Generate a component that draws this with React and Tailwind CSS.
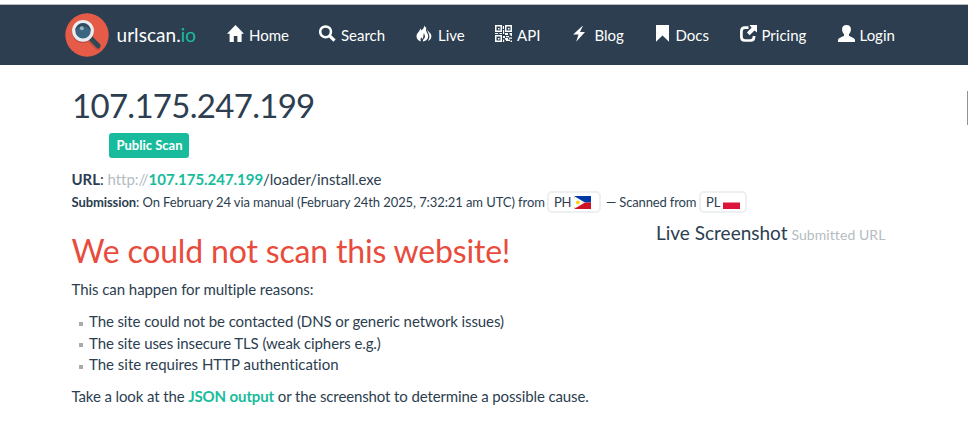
const glyphs = {
  home: <path fill="#fff" d="M8.5 0 17 8.8H14.6V17H10.4V11H6.8V17H2.6V8.8H0Z" />,
  search: (
    <g fill="none" stroke="#fff">
      <circle cx="6.6" cy="6.8" r="5.4" strokeWidth="2.5" />
      <path d="M10.700 10.900 15.500 15.700" strokeWidth="3.2" />
    </g>
  ),
  live: (
    <path
      fill="#fff"
      d="M8.200 0C8.500 2.800 7 4 5.400 5.400 5.200 4.800 4.800 4 4.200 3.500 4 6.500 .5 8 .5 11.300c0 2.600 1.700 4.400 4.400 5.200C4.300 14.800 4.400 13.700 5.300 12.300c.2 1 .6 1.300 1.200 1.600C8 12 6.900 10 8 8c.2 1.800 1.100 2.200 1 3.500 0 1.500-1.500 2.500-2 3.800-.2.500-.1.900.2 1.200C10.500 15.500 12.300 13.900 12.200 10.900 12 8 8.900 6.200 10.400 2.800 9.200 2.300 8.500 1.500 8.200 0ZM11.300 4.300c-.3 2.500 2.100 3.700 2.100 7.200 0 2-.7 3.400-1.700 4.700 2.300-.9 3.700-2.500 3.700-5.100C15.400 8 11.700 7.200 11.300 4.300Z"
    />
  ),
  api: (
    <g fill="#fff">
      <path
        fillRule="evenodd"
        d="M0 0H7V7H0ZM1.5 1.5V5.5H5.5V1.5ZM10 0H17V7H10ZM11.5 1.5V5.5H15.5V1.5ZM0 10H7V17H0ZM1.5 11.5V15.5H5.5V11.5Z"
      />
      <path d="M3 3h1.5v1.5H3ZM13 3h1.5v1.5H13ZM3 13h1.5v1.5H3ZM7.8 1H9v3H7.8ZM8 5h1.2v4H8ZM0 8h3v1H0ZM4.5 8H7v1H4.5ZM10 8h3v2h-3ZM14.5 8H17v3h-1.5V9.5h-1ZM8 11h2v2H8ZM11 11h3v1.3h-3ZM10 13h3v1.5h2V16h-4v-1.3h-1ZM14 12.5h3v1.3h-3ZM8 14.5h1.2V17H8ZM15.5 15.5H17V17h-1.5Z" />
    </g>
  ),
  blog: <path fill="#fff" d="M9.300 1 .2 9.500H5.500L3.200 16.700 12 7.100H7L9.800 1Z" />,
  docs: <path fill="#fff" d="M2 0H15V16.8L8.5 10.6 2 16.8Z" />,
  pricing: (
    <g>
      <path d="M8.500 2.600H5Q1.400 2.600 1.400 6.200V12Q1.400 15.500 5 15.500H10.500Q14 15.500 14 12V11" fill="none" stroke="#fff" strokeWidth="2.700" />
      <path fill="#fff" d="M9.500 0H17V7.500L14.500 5.600 9.700 10.300 6.900 7.500 11.600 2.700Z" />
    </g>
  ),
  login: (
    <path
      fill="#fff"
      d="M8.500 0C5.500 0 4 1.700 4.100 4.400 4.200 6.500 4.700 7.700 6 9V10.700C4.700 12 .2 12.500 0 15V17H17V15C16.800 12.500 12.300 12 11 10.700V9C12.300 7.700 12.800 6.500 12.900 4.400 13 1.700 11.500 0 8.500 0Z"
    />
  ),
};

const items = [
  { id: "home", label: "Home", box: "w-[92px]" },
  { id: "search", label: "Search", box: "w-[97px]" },
  { id: "live", label: "Live", box: "w-[79px]" },
  { id: "api", label: "API", box: "w-[77.500px]" },
  { id: "blog", label: "Blog", box: "w-[81px]" },
  { id: "docs", label: "Docs", box: "w-[86px]" },
  { id: "pricing", label: "Pricing", box: "w-[98px]" },
  { id: "login", label: "Login", box: "w-[60px]" },
];

function Logo() {
  return (
    <svg width="44" height="44" viewBox="0 0 44 44" className="shrink-0">
      <circle cx="22" cy="22" r="21.7" fill="#e55b47" />
      <path d="M26 28 33 35" stroke="#bd4d41" strokeWidth="4.5" strokeLinecap="round" />
      <circle cx="18" cy="19.3" r="10.800" fill="#bd4d41" />
      <path d="M25 24.500 33.200 32.700" stroke="#2f4856" strokeWidth="4.800" strokeLinecap="round" />
      <circle cx="18" cy="17.8" r="9.3" fill="#3b6580" stroke="#e9edf0" strokeWidth="3.2" />
      <path d="M10.300 18a7.700 7.700 0 0 1 15.400 0c-1.400-3-4.200-4.400-7.700-4.400s-6.300 1.400-7.700 4.400Z" fill="#304b5e" />
      <circle cx="16.800" cy="15.300" r="2" fill="#9bb3c1" />
    </svg>
  );
}

function Flag({ country }) {
  return country === "PH" ? (
    <svg width="17" height="13" viewBox="0 0 17 13">
      <path fill="#0038a8" d="M0 0H17V6.500H0Z" />
      <path fill="#ce1126" d="M0 6.500H17V13H0Z" />
      <path fill="#fff" d="M0 0 11 6.500 0 13Z" />
      <circle cx="3.800" cy="6.500" r="1.900" fill="#fcd116" />
      <path fill="#fcd116" d="M0 1h1v1H0ZM0 11h1v1H0ZM8.500 6h1v1h-1Z" />
    </svg>
  ) : (
    <svg width="17" height="13" viewBox="0 0 17 13">
      <path fill="#fff" d="M0 0H17V6.500H0Z" />
      <path fill="#dc143c" d="M0 6.500H17V13H0Z" />
    </svg>
  );
}

const reasons = [
  { text: "The site could not be contacted (DNS or generic network issues)", line: "h-[21px] tracking-[-0.1px]" },
  { text: "The site uses insecure TLS (weak ciphers e.g.)", line: "h-[22px] tracking-[-0.1px]" },
  { text: "The site requires HTTP authentication", line: "h-[21px] tracking-[0px]" },
];

export default function App() {
  return (
    <div className="h-[447px] w-[968px] overflow-hidden bg-white pt-1 font-[Lato,sans-serif] text-[15px] leading-[21px] text-[#2c3e50] [font-variant-ligatures:none]">
      <nav className="flex h-[61px] items-center border-t border-[#b8bcbe] bg-[#2c3e50] pl-[65px] text-white">
        <Logo />
        <div className="ml-[7.500px] w-[110.500px] text-[19px] leading-[26px] tracking-[0.05px]">
          urlscan.<span className="text-[#18bc9c]">io</span>
        </div>
        {items.map((item) => (
          <a key={item.id} className={"flex shrink-0 items-center whitespace-nowrap " + item.box}>
            <svg width="17" height="17" viewBox="0 0 17 17" className="-mt-[3px] mr-[5px] shrink-0">
              {glyphs[item.id]}
            </svg>
            <span className="mt-px">{item.label}</span>
          </a>
        ))}
      </nav>

      <div className="flex h-[68px] justify-between">
        <h1 className="mt-[19px] ml-[72px] text-[33px] leading-[42px] tracking-[-0.7px]">107.175.247.199</h1>
        <div className="mt-[26px] h-[34px] w-px bg-[#8b9698]" />
      </div>
      <div className="ml-[109px] flex h-[25px] w-[80px] items-center justify-center rounded-[3px] bg-[#18bc9c] pl-px text-[13px] font-bold whitespace-nowrap text-white">
        Public Scan
      </div>
      <div className="mt-[11px] ml-[71.500px] h-[21px] tracking-[-0.04px] whitespace-nowrap">
        <b>URL</b>: <span className="text-[#b4bcc2]">http://</span>
        <b className="text-[#18bc9c]">107.175.247.199</b>/loader/install.exe
      </div>
      <div className="ml-[71px] flex h-[24px] items-center text-[13px] whitespace-nowrap">
        <div className="w-[476px] pl-[0.500px] tracking-[-0.09px]">
          <b>Submission</b>: On February 24 via manual (February 24th 2025, 7:32:21 am UTC) from
        </div>
        <div className="flex h-[22px] w-[54px] items-center gap-[3px] rounded-[5px] border-2 border-[#ecf0f1] pl-[5px] tracking-[-0.3px]">
          PH <Flag country="PH" />
        </div>
        <div className="ml-[5px] w-[93px] tracking-[-0.15px]">— Scanned from</div>
        <div className="flex h-[22px] w-[48px] items-center gap-[3px] rounded-[5px] border-2 border-[#ecf0f1] pl-[5px]">
          PL <Flag country="PL" />
        </div>
      </div>

      <main className="flex pl-[71px]">
        <section className="w-[585px] whitespace-nowrap">
          <h2 className="mt-[16px] ml-[0.500px] text-[32px] leading-[42px] tracking-[-0.17px] text-[#e74c3c]">
            We could not scan this website!
          </h2>
          <p className="mt-[7px] ml-[0.500px] tracking-[-0.06px]">This can happen for multiple reasons:</p>
          <ul className="mt-[11px]">
            {reasons.map((reason) => (
              <li key={reason.text} className={"flex items-center pl-[8px] " + reason.line}>
                <span className="mt-[4px] mr-[6px] h-[4px] w-[4px] bg-[#aaa]" />
                {reason.text}
              </li>
            ))}
          </ul>
          <p className="mt-[11px] ml-[0.500px] tracking-[-0.12px]">
            Take a look at the <b className="text-[#18bc9c]">JSON output</b> or the screenshot to determine a possible cause.
          </p>
        </section>
        <h4 className="mt-[5px] text-[19px] leading-[28px] whitespace-nowrap">
          Live Screenshot <span className="-ml-px text-[14px] tracking-[0.08px] text-[#b4bcc2]">Submitted URL</span>
        </h4>
      </main>
    </div>
  );
}
